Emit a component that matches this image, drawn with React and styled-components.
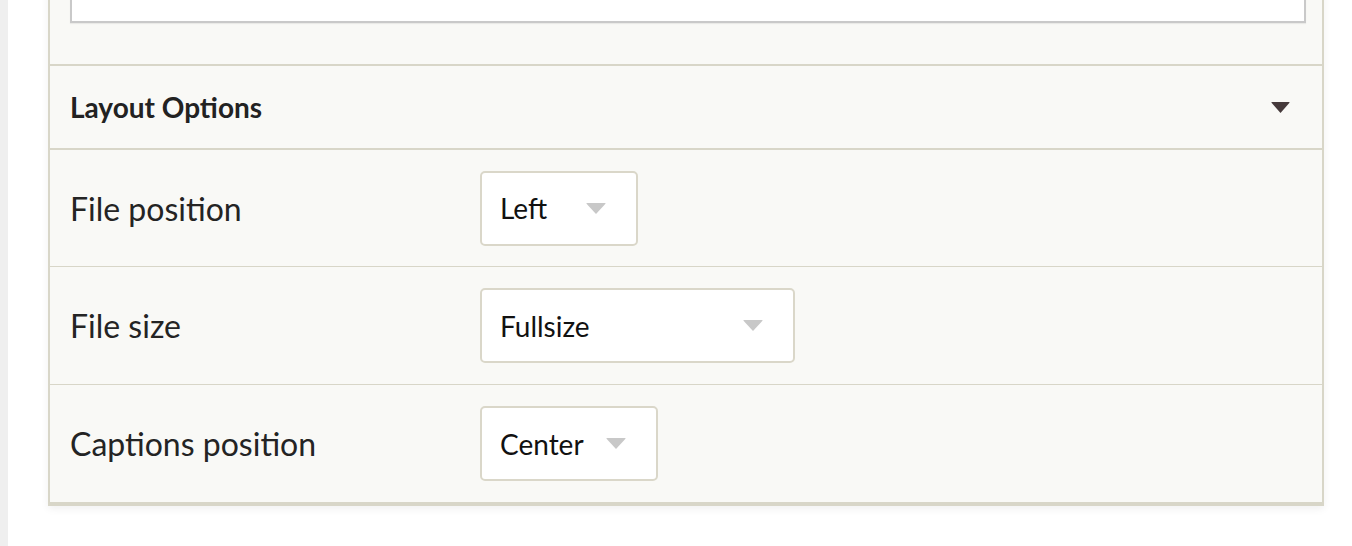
import React from "react";
import styled, { createGlobalStyle } from "styled-components";

const Global = createGlobalStyle`
  html, body { margin: 0; padding: 0; background: #ffffff; overflow: hidden; }
  body { font-family: Lato, "Open Sans", sans-serif; color: #222; }
  * { box-sizing: border-box; }
`;

const Page = styled.div`
  display: flex;
  height: 546px;
`;

const SideEdge = styled.div`
  width: 8px;
  flex: none;
  background: #efefef;
`;

const Main = styled.div`
  flex: 1;
  padding: 0 28px 0 40px;
`;

const Panel = styled.div`
  margin-top: -119px;
  background: #f9f9f6;
  border: 2px solid #d8d6c8;
  border-bottom-width: 4px;
  box-shadow: 0 3px 8px rgba(0, 0, 0, 0.06);
`;

const TopSection = styled.div`
  padding: 20px 16px 41px 20px;
`;

const TextBox = styled.div`
  height: 120px;
  background: #ffffff;
  border: 2px solid #c9c9c9;
  border-top-color: #d6d6d6;
  box-shadow: 0 1px 1px rgba(0, 0, 0, 0.06);
`;

const Header = styled.div`
  display: flex;
  align-items: center;
  justify-content: space-between;
  height: 86px;
  padding: 0 32px 0 20px;
  border-top: 2px solid #d8d6c8;
  border-bottom: 2px solid #d8d6c8;
`;

const HeaderTitle = styled.h3`
  margin: 0;
  font-size: 28px;
  font-weight: 700;
  color: #222;
`;

const Caret = styled.svg`
  display: block;
  width: ${(p) => p.w}px;
  height: ${(p) => p.h}px;
  flex: none;
`;

const Row = styled.div`
  display: grid;
  grid-template-columns: 410px auto;
  align-items: center;
  height: ${(p) => p.h}px;
  padding: 0 20px;
  border-bottom: ${(p) => (p.last ? "none" : "1px solid #d8d6c8")};
`;

const Label = styled.label`
  font-size: 32px;
  color: #242424;
`;

const Select = styled.div`
  display: flex;
  align-items: center;
  justify-content: space-between;
  width: ${(p) => p.w}px;
  height: 75px;
  padding: 0 30px 0 18px;
  background: #ffffff;
  border: 2px solid #dad7c9;
  border-radius: 5px;
  font-size: 28px;
  color: #111;
`;

const DownArrow = ({ w, h, color }) => (
  <Caret w={w} h={h} viewBox={`0 0 ${w} ${h}`}>
    <path d={`M0.5 0.8 Q0 0 1.2 0 L${w - 1.2} 0 Q${w} 0 ${w - 0.5} 0.8 L${w / 2} ${h} Z`} fill={color} />
  </Caret>
);

const rows = [
  { label: "File position", value: "Left", w: 158, h: 117 },
  { label: "File size", value: "Fullsize", w: 315, h: 118 },
  { label: "Captions position", value: "Center", w: 178, h: 117 },
];

export default function App() {
  return (
    <>
      <Global />
      <Page>
        <SideEdge />
        <Main>
          <Panel>
            <TopSection>
              <TextBox />
            </TopSection>
            <Header>
              <HeaderTitle>Layout Options</HeaderTitle>
              <DownArrow w={19} h={11} color="#463a3b" />
            </Header>
            {rows.map((r, i) => (
              <Row key={r.label} h={r.h} last={i === rows.length - 1}>
                <Label>{r.label}</Label>
                <Select w={r.w}>
                  <span>{r.value}</span>
                  <DownArrow w={20} h={11} color="#c8c8c8" />
                </Select>
              </Row>
            ))}
          </Panel>
        </Main>
      </Page>
    </>
  );
}
